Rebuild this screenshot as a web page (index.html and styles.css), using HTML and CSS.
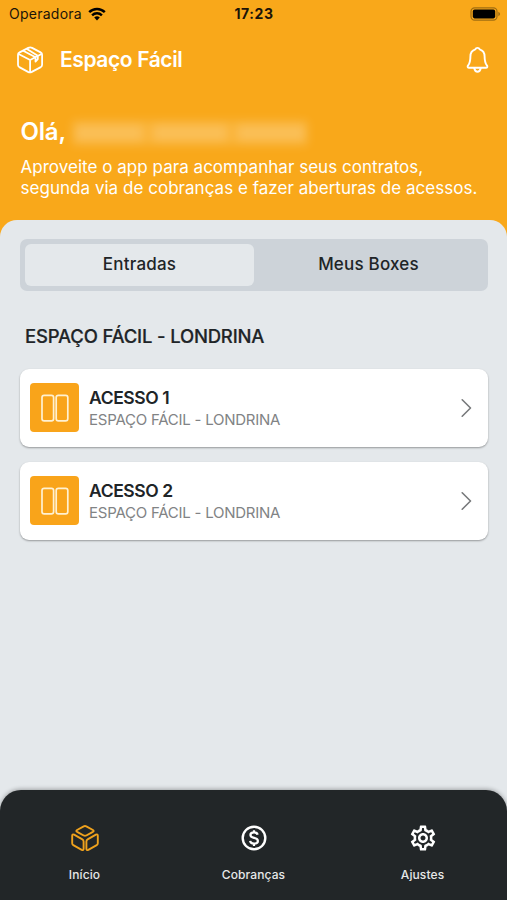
FILE: index.html
```
<!DOCTYPE html>
<html lang="pt-BR">
<head>
	<meta charset="UTF-8">
	<meta name="viewport" content="width=device-width, initial-scale=1">
	<title>Espaço Fácil</title>
	<link rel="stylesheet" href="styles.css">
</head>
<body>
	<div class="app">
		<header class="header">
			<div class="status-bar">
				<div class="carrier">
					<span class="carrier-name">Operadora</span>
					<svg class="wifi" viewBox="0 0 18 14">
						<path d="M1.2 5.2a11.2 11.2 0 0 1 15.6 0" fill="none" stroke="#000" stroke-width="2.5"/>
						<path d="M4.1 8.3a7 7 0 0 1 9.8 0" fill="none" stroke="#000" stroke-width="2.4"/>
						<path d="M6.2 10.6a4 4 0 0 1 5.6 0L9 13.5z"/>
					</svg>
				</div>
				<span class="clock">17:23</span>
				<svg class="battery" viewBox="0 0 31 14">
					<rect x="1" y="0.8" width="26" height="12.4" rx="3.6" fill="none" stroke="#a06d12" stroke-width="1.2"/>
					<rect x="2.8" y="2.6" width="22.4" height="8.8" rx="1.8"/>
					<path d="M28.3 4.7q1.8.8 1.8 2.3t-1.8 2.3z" fill="#a06d12"/>
				</svg>
			</div>
			<div class="top-bar">
				<svg class="logo" viewBox="0 0 28 28" fill="none" stroke="#fff" stroke-width="1.8" stroke-linejoin="round" stroke-linecap="round">
					<path d="M12.3 1.9 3.6 6.4Q2 7.200 2 8.900v9.900q0 1.500 1.300 2.300l8.700 4.800q1.900.9 3.800 0l9-4.800q1.300-.8 1.300-2.300V8.900Q26.100 7.200 24.600 6.400l-8.500-4.500q-1.900-.9-3.800 0z"/>
					<path d="m2.6 8 11.500 6 11.400-6M14.100 14v12.200M7.200 4.700l12.300 6.600v4.300l2.300-2.500V9.800L10.900 3"/>
				</svg>
				<h1 class="title">Espaço Fácil</h1>
				<svg class="bell" viewBox="0 0 24 28" fill="none" stroke="#fff" stroke-width="1.9" stroke-linejoin="round" stroke-linecap="round">
					<path d="M12 1.900c-1.200 0-1.900.7-2.200 1.500C6.600 4.400 4.900 6.800 4.900 10.400c0 5.800-.9 7.200-2.300 9-1 1.200-.3 2.400 1 2.400h16.800c1.300 0 2-1.200 1-2.400-1.400-1.800-2.300-3.200-2.300-9 0-3.600-1.700-6-4.900-7-.3-.8-1-1.500-2.200-1.500z"/>
					<path d="M8.700 22q.8 3.800 3.300 3.800t3.300-3.800"/>
				</svg>
			</div>
			<div class="greeting">
				<h2 class="hello">Olá,</h2>
				<div class="hidden-name">
					<span class="name-part"></span>
					<span class="name-part"></span>
					<span class="name-part"></span>
				</div>
			</div>
			<p class="intro">Aproveite o app para acompanhar seus contratos,<br>segunda via de cobranças e fazer aberturas de acessos.</p>
		</header>

		<main class="panel">
			<div class="tabs">
				<div class="tab tab-active">Entradas</div>
				<div class="tab">Meus Boxes</div>
			</div>
			<h3 class="unit">ESPAÇO FÁCIL - LONDRINA</h3>
			<div class="card">
				<div class="card-icon">
					<svg viewBox="0 0 28 28">
						<rect x="1" y="1.3" width="11.6" height="25.6" rx="2.2"/>
						<rect x="15.2" y="1.3" width="11.6" height="25.6" rx="2.2"/>
					</svg>
				</div>
				<div class="card-text">
					<p class="card-title">ACESSO 1</p>
					<p class="card-place">ESPAÇO FÁCIL - LONDRINA</p>
				</div>
				<svg class="arrow" viewBox="0 0 11 20"><path d="m1.2 1.800 8.300 8.200-8.300 8.200"/></svg>
			</div>
			<div class="card">
				<div class="card-icon">
					<svg viewBox="0 0 28 28">
						<rect x="1" y="1.3" width="11.6" height="25.6" rx="2.2"/>
						<rect x="15.2" y="1.3" width="11.6" height="25.6" rx="2.2"/>
					</svg>
				</div>
				<div class="card-text">
					<p class="card-title">ACESSO 2</p>
					<p class="card-place">ESPAÇO FÁCIL - LONDRINA</p>
				</div>
				<svg class="arrow" viewBox="0 0 11 20"><path d="m1.2 1.800 8.300 8.200-8.300 8.200"/></svg>
			</div>
		</main>

		<nav class="bottom-nav">
			<div class="nav-item">
				<svg viewBox="0 0 30 30" fill="none" stroke="#f0a21d" stroke-width="1.9" stroke-linejoin="round">
					<path d="m13.700 3.300-6.600 3.700q-1.500.9 0 1.800l6.600 3.700q1.300.6 2.600 0l6.600-3.700q1.500-.9 0-1.800l-6.600-3.700q-1.300-.6-2.600 0z"/>
					<path d="M4.100 11.700q-1.900-.9-1.900 1.100v7.500q0 1.300 1.100 1.900l8.400 4.700q1.900.8 1.900-1.100v-7.400q0-1.400-1.200-2z"/>
					<path d="M25.900 11.700q1.900-.9 1.900 1.100v7.500q0 1.300-1.100 1.900l-8.400 4.700q-1.900.8-1.900-1.100v-7.400q0-1.400 1.200-2z"/>
				</svg>
				<span>Início</span>
			</div>
			<div class="nav-item">
				<svg viewBox="0 0 30 30" fill="none" stroke="#fff">
					<circle cx="15" cy="15" r="11.3" stroke-width="2.4"/>
					<path d="M18.600 11.800c-.3-1.600-1.700-2.400-3.600-2.400-2.200 0-3.600 1-3.600 2.600 0 1.800 1.500 2.400 3.600 2.900 2.300.5 3.900 1.200 3.900 3 0 1.700-1.600 2.700-3.900 2.700-2.200 0-3.700-1-3.900-2.700M15 7.200v2.200M15 20.600v2.300" stroke-width="2.2"/>
				</svg>
				<span>Cobranças</span>
			</div>
			<div class="nav-item">
				<svg viewBox="0 0 24 24" fill="#fff">
					<path d="M19.430 12.980c.04-.32.07-.64.07-.98 0-.34-.03-.66-.07-.98l2.110-1.650c.19-.15.24-.42.12-.64l-2-3.460c-.09-.16-.26-.25-.44-.25-.06 0-.12.01-.17.03l-2.490 1c-.52-.4-1.080-.73-1.690-.98l-.38-2.650C14.460 2.180 14.250 2 14 2h-4c-.25 0-.46.18-.49.42l-.38 2.650c-.61.25-1.170.59-1.690.98l-2.490-1c-.06-.02-.12-.03-.18-.03-.17 0-.34.09-.43.25l-2 3.460c-.13.22-.07.49.12.64l2.110 1.650c-.04.32-.07.65-.07.98s.03.66.07.98l-2.110 1.650c-.19.15-.24.42-.12.64l2 3.460c.09.16.26.25.44.25.06 0 .12-.01.17-.03l2.490-1c.52.4 1.080.73 1.690.98l.38 2.650c.03.24.24.42.49.42h4c.25 0 .46-.18.49-.42l.38-2.650c.61-.25 1.170-.59 1.690-.98l2.490 1c.06.02.12.03.18.03.17 0 .34-.09.43-.25l2-3.460c.12-.22.07-.49-.12-.64l-2.110-1.650zm-1.980-1.710c.04.31.05.52.05.73 0 .21-.02.43-.05.73l-.14 1.130.89.7 1.080.84-.7 1.210-1.270-.51-1.040-.42-.9.68c-.43.32-.84.56-1.250.73l-1.060.43-.16 1.130-.2 1.350h-1.400l-.19-1.350-.16-1.130-1.060-.43c-.43-.18-.83-.41-1.230-.71l-.91-.7-1.060.43-1.270.51-.7-1.210 1.080-.84.89-.7-.14-1.130c-.03-.31-.05-.54-.05-.74s.02-.43.05-.73l.14-1.130-.89-.7-1.080-.84.7-1.210 1.270.51 1.040.42.9-.68c.43-.32.84-.56 1.250-.73l1.060-.43.16-1.130.2-1.350h1.390l.19 1.350.16 1.130 1.060.43c.43.18.83.41 1.230.71l.91.7 1.060-.43 1.270-.51.7 1.210-1.070.85-.89.7.14 1.130zM12 8c-2.210 0-4 1.790-4 4s1.790 4 4 4 4-1.790 4-4-1.790-4-4-4zm0 6c-1.100 0-2-.9-2-2s.9-2 2-2 2 .9 2 2-.9 2-2 2z"/>
				</svg>
				<span>Ajustes</span>
			</div>
		</nav>
	</div>
</body>
</html>
```
FILE: styles.css
```
* {
	box-sizing: border-box;
}
body {
	font-family: Inter, sans-serif;
	margin: 0;
	color: #202427;
}
h1, h2, h3, p {
	margin: 0;
}
svg {
	display: block;
	flex: none;
}
.app {
	display: flex;
	flex-direction: column;
	height: 900px;
	background-color: #f9a81a;
	overflow: hidden;
}

/* Header */
.header {
	height: 220px;
	color: white;
}
.status-bar {
	display: grid;
	grid-template-columns: 1fr auto 1fr;
	align-items: center;
	height: 27px;
	padding: 0 6px 0 9px;
	color: #1b1408;
}
.carrier {
	display: flex;
	align-items: center;
	gap: 6px;
}
.carrier-name {
	font-size: 14px;
	letter-spacing: 0.25px;
}
.wifi {
	width: 18px;
	height: 14px;
}
.clock {
	margin-right: 2px;
	font-size: 14px;
	font-weight: 700;
	letter-spacing: 0.6px;
}
.battery {
	width: 31px;
	height: 14px;
	justify-self: end;
}
.top-bar {
	display: flex;
	align-items: center;
	height: 66px;
	padding: 0 17px 0 16px;
}
.logo {
	width: 28px;
	height: 28px;
}
.title {
	flex: 1;
	margin: -2px 0 0 16px;
	font-size: 21px;
	font-weight: 600;
	letter-spacing: -0.4px;
}
.bell {
	width: 25px;
	height: 28px;
}
.greeting {
	display: flex;
	align-items: center;
	height: 40px;
	margin-top: 18px;
	padding-left: 20.5px;
}
.hello {
	font-size: 24px;
	font-weight: 600;
	letter-spacing: -0.2px;
}
.hidden-name {
	display: flex;
	gap: 10px;
	margin: 3px 0 0 6px;
	padding: 5px 3px;
	background-color: rgba(255, 255, 255, 0.13);
	filter: blur(5px);
}
.name-part {
	width: 68px;
	height: 16px;
	background-color: rgba(255, 255, 255, 0.16);
}
.name-part:nth-child(2) {
	width: 74px;
}
.intro {
	margin: 6px 0 0 20.5px;
	font-size: 17px;
	line-height: 21px;
	letter-spacing: 0.03px;
	white-space: nowrap;
}

/* Content */
.panel {
	flex: 1;
	margin-bottom: -24px;
	padding: 19px 19px 0 20px;
	border-radius: 17px 17px 0 0;
	background-color: #e4e8eb;
}
.tabs {
	display: flex;
	height: 52px;
	padding: 5px;
	border-radius: 7px;
	background-color: #cdd3d9;
}
.tab {
	flex: 1;
	border-radius: 6px;
	font-size: 17px;
	font-weight: 500;
	letter-spacing: 0.2px;
	line-height: 40px;
	text-align: center;
}
.tab-active {
	background-color: #e4e8eb;
}
.unit {
	margin: 33px 0 21px 5px;
	font-size: 18.5px;
	font-weight: 500;
	line-height: 24px;
	letter-spacing: -0.18px;
	-webkit-text-stroke: 0.2px #202427;
}
.card {
	display: flex;
	align-items: center;
	height: 78px;
	margin-bottom: 15px;
	padding: 0 16px 0 10px;
	border-radius: 9px;
	background-color: white;
	box-shadow: 0 1px 2px rgba(0, 0, 0, 0.35);
}
.card-icon {
	display: flex;
	align-items: center;
	justify-content: center;
	width: 49px;
	height: 49px;
	margin-bottom: 1px;
	border-radius: 4px;
	background-color: #f9a41a;
}
.card-icon svg {
	width: 28px;
	height: 28px;
	fill: none;
	stroke: #fff1d2;
	stroke-width: 1.7;
}
.card-text {
	flex: 1;
	margin-left: 10px;
}
.card-title {
	font-size: 17.5px;
	font-weight: 600;
	line-height: 22px;
	letter-spacing: -0.4px;
}
.card-place {
	font-size: 15px;
	line-height: 21px;
	letter-spacing: -0.24px;
	color: #818385;
}
.arrow {
	width: 11px;
	height: 20px;
	fill: none;
	stroke: #77797b;
	stroke-width: 1.6;
	stroke-linecap: round;
	stroke-linejoin: round;
}

/* Bottom navigation */
.bottom-nav {
	display: flex;
	height: 110px;
	border-radius: 21px 21px 0 0;
	background-color: #222628;
	box-shadow: 0 -1px 4px rgba(0, 0, 0, 0.3);
	z-index: 1;
}
.nav-item {
	flex: 1;
	display: flex;
	flex-direction: column;
	align-items: center;
	padding-top: 33px;
	color: #e7e8e8;
	font-size: 12px;
	font-weight: 500;
	letter-spacing: 0.1px;
}
.nav-item svg {
	width: 30px;
	height: 30px;
	margin-bottom: 14px;
}
```
